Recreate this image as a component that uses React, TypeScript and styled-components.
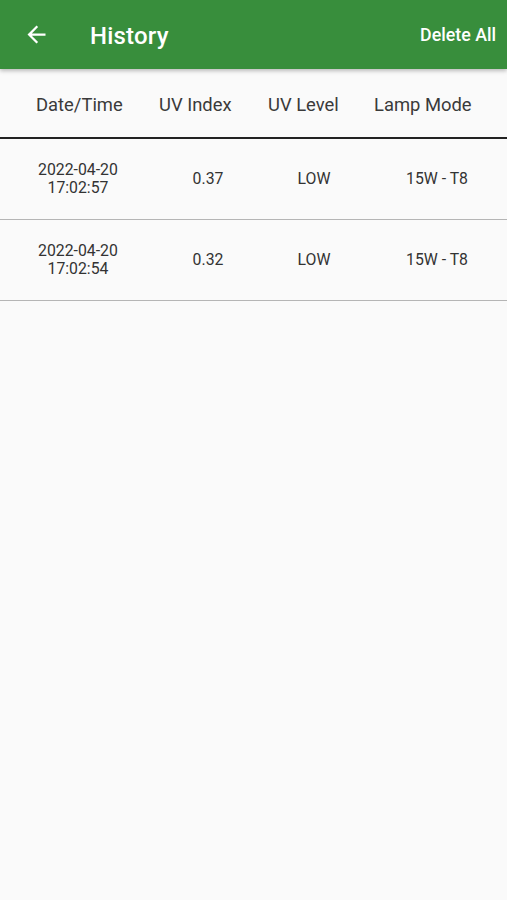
import React from "react";
import styled, { createGlobalStyle } from "styled-components";

interface HistoryEntry {
  date: string;
  time: string;
  uvIndex: string;
  uvLevel: string;
  lampMode: string;
}

const entries: HistoryEntry[] = [
  { date: "2022-04-20", time: "17:02:57", uvIndex: "0.37", uvLevel: "LOW", lampMode: "15W - T8" },
  { date: "2022-04-20", time: "17:02:54", uvIndex: "0.32", uvLevel: "LOW", lampMode: "15W - T8" },
];

const columns = ["Date/Time", "UV Index", "UV Level", "Lamp Mode"];

export default function App() {
  return (
    <Root>
      <GlobalStyle />
      <AppBar>
        <BackButton aria-label="back">
          <svg width="27" height="27" viewBox="0 0 24 24">
            <path d="M20 11H7.83l5.59-5.59L12 4l-8 8 8 8 1.41-1.41L7.83 13H20v-2z" fill="#fff" />
          </svg>
        </BackButton>
        <Title>History</Title>
        <ActionButton>Delete All</ActionButton>
      </AppBar>
      <HeaderRow>
        {columns.map((c) => (
          <HeaderCell key={c}>{c}</HeaderCell>
        ))}
      </HeaderRow>
      {entries.map((e) => (
        <DataRow key={e.time}>
          <DataCell>
            {e.date}
            <br />
            {e.time}
          </DataCell>
          <DataCell>{e.uvIndex}</DataCell>
          <DataCell>{e.uvLevel}</DataCell>
          <DataCell>{e.lampMode}</DataCell>
        </DataRow>
      ))}
    </Root>
  );
}

const GlobalStyle = createGlobalStyle`
  html, body {
    margin: 0;
    padding: 0;
    background: #fafafa;
  }
  body {
    font-family: Roboto, "Liberation Sans", sans-serif;
  }
`;

const Root = styled.div`
  width: 507px;
  min-height: 900px;
  background: #fafafa;
`;

const AppBar = styled.header`
  height: 69px;
  background: #388e3c;
  display: flex;
  align-items: center;
  padding: 0 12px 0 12px;
  box-sizing: border-box;
  box-shadow: 0 2px 4px rgba(0, 0, 0, 0.25);
  position: relative;
  z-index: 1;
`;

const BackButton = styled.button`
  width: 48px;
  height: 48px;
  border: none;
  background: transparent;
  padding: 0;
  display: flex;
  align-items: center;
  justify-content: center;
  margin-right: 30px;
`;

const Title = styled.h1`
  flex: 1;
  margin: 0;
  padding-top: 3px;
  color: #fff;
  font-size: 24px;
  font-weight: 500;
  letter-spacing: 0.2px;
`;

const ActionButton = styled.button`
  border: none;
  background: transparent;
  color: #fff;
  font-family: Roboto, "Liberation Sans", sans-serif;
  font-size: 17.8px;
  font-weight: 500;
  padding: 0;
  margin-right: -1px;
`;

const HeaderRow = styled.div`
  height: 70px;
  box-sizing: border-box;
  padding-top: 2px;
  display: grid;
  grid-template-columns: 123px 109px 106px 1fr;
  align-items: center;
  padding-left: 36px;
  border-bottom: 2px solid #222;
`;

const HeaderCell = styled.div`
  font-size: 18.4px;
  color: #3a3a3a;
`;

const DataRow = styled.div`
  height: 81px;
  box-sizing: border-box;
  display: grid;
  grid-template-columns: 156px 104px 108px 138px;
  align-items: center;
  border-bottom: 1.5px solid #b5b5b5;
`;

const DataCell = styled.div`
  text-align: center;
  font-size: 15.8px;
  line-height: 18px;
  color: #333;
`;
